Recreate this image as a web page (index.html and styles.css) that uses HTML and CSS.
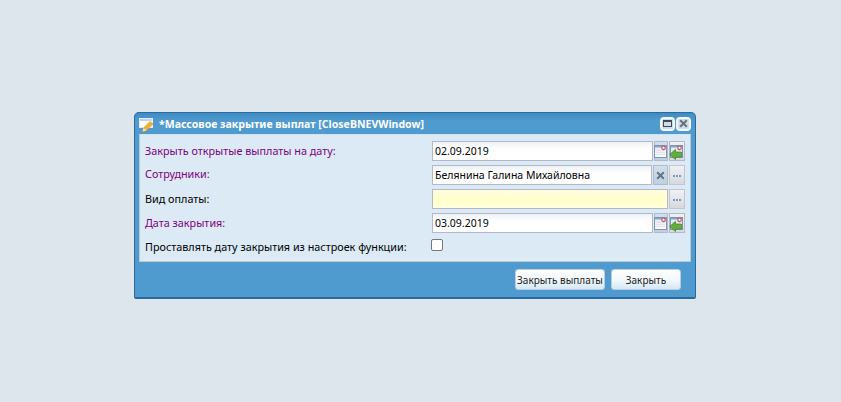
FILE: index.html
```html
<!DOCTYPE html>
<html lang="ru">
<head>
<meta charset="utf-8">
<title>Массовое закрытие выплат</title>
<link rel="stylesheet" href="styles.css">
</head>
<body>
<svg class="defs" width="0" height="0" aria-hidden="true">
  <defs>
    <linearGradient id="cal" x1="0" y1="0" x2="0" y2="1"><stop offset="0" stop-color="#dfe6f3"/><stop offset="1" stop-color="#fbfbfc"/></linearGradient>
    <symbol id="calendar" viewBox="0 0 14 14">
      <rect x="0.5" y="1.5" width="12" height="12" fill="url(#cal)" stroke="#7f95b8"/>
      <rect x="1" y="2" width="11" height="1.5" fill="#8aa3ca"/>
      <path d="M2 6.5h9M2 8.5h9M2 10.5h9" stroke="#e2e4e8"/>
      <circle cx="9.5" cy="3.8" r="1.8" fill="#f4f4f4" stroke="#c24a60" stroke-width="1.1"/>
    </symbol>
    <symbol id="arrow" viewBox="0 0 13 11">
      <path d="M0.5 5.5 6.5 0.5V3H12.5V8H6.5V10.5Z" fill="#68ad3c" stroke="#3f8a2e" stroke-width="0.8"/>
    </symbol>
  </defs>
</svg>
<main class="window">
  <header class="titlebar">
    <svg class="title-icon" viewBox="0 0 16 16" width="16" height="16" aria-hidden="true">
      <rect x="0.5" y="1.5" width="13" height="9" fill="#fdfdff" stroke="#e6ecf7"/>
      <rect x="1" y="2" width="12" height="2" fill="#c6d0ec"/>
      <path d="M3.5 14.5 4.5 11 11 4.5 14 7 7.5 13.5Z" fill="#f2b02e" stroke="#d69a2a" stroke-width="0.6"/>
      <path d="M3.5 14.5 4.5 11 7.5 13.5Z" fill="#f5e1b0"/>
    </svg>
    <h1 class="title">*Массовое закрытие выплат [CloseBNEVWindow]</h1>
    <button class="tool" aria-label="Развернуть"><span class="max-glyph"></span></button>
    <button class="tool" aria-label="Закрыть">
      <svg viewBox="0 0 9 9" width="9" height="9" aria-hidden="true"><path d="M1.2 1.2 7.8 7.8M7.8 1.2 1.2 7.8" stroke="#66727f" stroke-width="2"/></svg>
    </button>
  </header>
  <section class="form">
    <div class="row">
      <label class="label req">Закрыть открытые выплаты на дату:</label>
      <div class="field"><div class="input">02.09.2019</div>
        <span class="trig blue cal-trig"><svg class="cal"><use href="#calendar"/></svg></span>
        <span class="trig"><svg class="cal"><use href="#calendar"/></svg><svg class="arr"><use href="#arrow"/></svg></span>
      </div>
    </div>
    <div class="row">
      <label class="label req lifted">Сотрудники:</label>
      <div class="field"><div class="input">Белянина Галина Михайловна</div>
        <span class="trig blue x"><svg viewBox="0 0 9 9" width="9" height="9" aria-hidden="true"><path d="M1.2 1.2 7.8 7.8M7.8 1.2 1.2 7.8" stroke="#66727f" stroke-width="2"/></svg></span>
        <span class="trig dots"><i></i><i></i><i></i></span>
      </div>
    </div>
    <div class="row">
      <label class="label">Вид оплаты:</label>
      <div class="field"><div class="input yellow"></div>
        <span class="trig dots"><i></i><i></i><i></i></span>
      </div>
    </div>
    <div class="row">
      <label class="label req">Дата закрытия:</label>
      <div class="field"><div class="input">03.09.2019</div>
        <span class="trig blue cal-trig"><svg class="cal"><use href="#calendar"/></svg></span>
        <span class="trig"><svg class="cal"><use href="#calendar"/></svg><svg class="arr"><use href="#arrow"/></svg></span>
      </div>
    </div>
    <div class="row">
      <label class="label">Проставлять дату закрытия из настроек функции:</label>
      <div class="field"><span class="check"></span></div>
    </div>
  </section>
  <footer class="footer">
    <button class="btn wide">Закрыть выплаты</button>
    <button class="btn">Закрыть</button>
  </footer>
</main>
</body>
</html>
```
FILE: styles.css
```css
* { box-sizing: border-box; }
html, body { margin: 0; height: 100%; }
body {
  background: #dde5ed;
  padding: 112px 0 0 134px;
  font-family: "Noto Sans", sans-serif;
  font-size: 10.8px;
  line-height: 14px;
  color: #000;
  overflow: hidden;
}
.defs { position: absolute; }
.window {
  width: 562px;
  height: 187px;
  background: linear-gradient(#3f8cc2, #4f9bd0 8px);
  border: 1px solid #2a6a9e;
  border-bottom-width: 2px;
  border-radius: 5px 5px 2px 2px;
  padding: 0 4px;
  display: flex;
  flex-direction: column;
}
.titlebar {
  height: 21px;
  display: flex;
  align-items: center;
  gap: 1px;
  flex: none;
  padding-right: 0;
}
.title-icon { margin-right: 3px; margin-top: 2px; flex: none; }
.title {
  flex: 1;
  margin: 0;
  font-size: 10.55px;
  font-weight: bold;
  color: #fff;
  white-space: nowrap;
}
.tool {
  width: 15px;
  height: 14px;
  padding: 0;
  border: 2px solid #f4f8fb;
  border-radius: 4px;
  background: #cfdde8;
  display: flex;
  align-items: center;
  justify-content: center;
}
.max-glyph {
  display: block;
  width: 9px;
  height: 7px;
  border: 1px solid #3c4a5c;
  border-top-width: 2px;
}
.form {
  height: 128px;
  flex: none;
  background: #dbeaf5;
  border: 1px solid #bcc8d2;
  border-top-color: #d3e3ef;
  padding: 4px 0 0 5px;
  display: flex;
  flex-direction: column;
}
.row {
  display: flex;
  align-items: center;
  height: 24px;
  flex: none;
}
.label { width: 287px; flex: none; }
.lifted { margin-bottom: 3px; }
.req { color: #800080; }
.field { display: flex; flex: none; width: 253px; align-items: center; gap: 1px; }
.input {
  flex: 1;
  height: 20px;
  background: linear-gradient(#eef2f5, #fff 45%);
  border: 1px solid #b5b8c8;
  padding: 0 2px;
  font-size: 10.5px;
  line-height: 18px;
  white-space: nowrap;
}
.yellow { background: linear-gradient(#fffde0, #ffffc8 60%, #ffffe0); }
.trig {
  width: 16px;
  height: 20px;
  flex: none;
  border: 1px solid #b5b8c8;
  background: linear-gradient(#f0f1f3, #d6d9de);
  position: relative;
  display: flex;
  align-items: center;
  justify-content: center;
}
.blue { background: linear-gradient(#d2dfec, #bdd0e1); }
.cal-trig { width: 14px; }
.x { width: 15px; }
.cal { width: 14px; height: 14px; position: absolute; left: 0; top: 2px; }
.cal-trig .cal { left: -1px; }
.arr { width: 13px; height: 11px; position: absolute; left: -1px; top: 7px; }
.dots { gap: 1px; padding-top: 2px; border-color: #c3c6d0; }
.dots i { width: 2px; height: 2px; background: #7d9ac4; display: block; }
.check {
  display: block;
  width: 12px;
  height: 12px;
  background: #fff;
  border: 1px solid #767676;
  border-radius: 2px;
  margin-bottom: 4px;
  margin-left: -1px;
}
.footer {
  flex: 1;
  display: flex;
  justify-content: flex-end;
  align-items: center;
  gap: 6px;
  padding: 0 10px 0 0;
}
.btn {
  width: 70px;
  height: 21px;
  padding: 0;
  border: 1px solid #b9cfe0;
  border-radius: 3px;
  background: linear-gradient(#ffffff, #f3f9fd 50%, #d3e7f6);
  font: inherit;
  font-size: 10px;
  color: #222;
  white-space: nowrap;
}
.btn.wide { width: 90px; }
```
